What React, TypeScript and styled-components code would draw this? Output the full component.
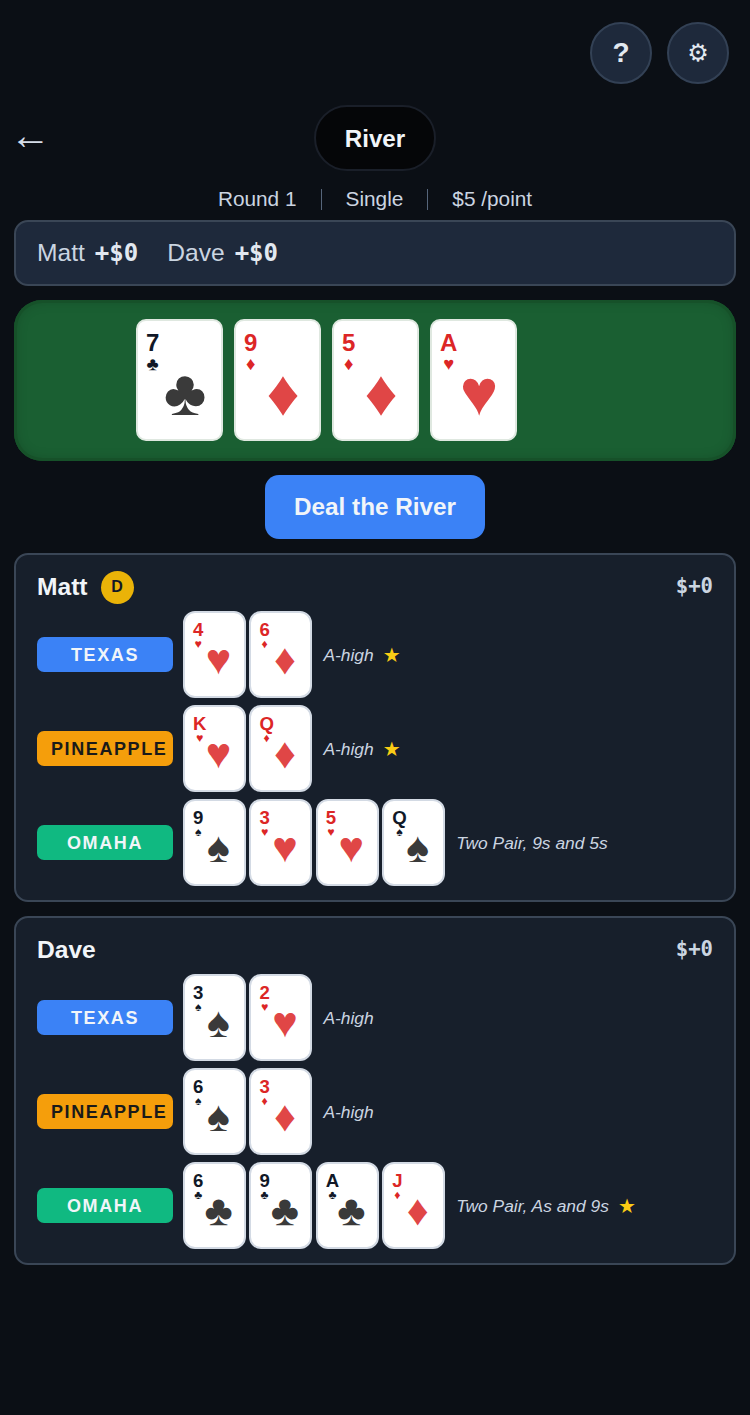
import React from "react";
import styled, { createGlobalStyle } from "styled-components";

type Suit = "club" | "diamond" | "heart" | "spade";
type CardData = { rank: string; suit: Suit };
type Variant = "texas" | "pineapple" | "omaha";

const SUIT_GLYPH: Record<Suit, string> = {
  club: "♣",
  diamond: "♦",
  heart: "♥",
  spade: "♠",
};

const isRed = (suit: Suit) => suit === "diamond" || suit === "heart";

const BADGE_COLORS: Record<Variant, { bg: string; fg: string }> = {
  texas: { bg: "#3b82f6", fg: "#f1f5f9" },
  pineapple: { bg: "#f59e0b", fg: "#1a1a1a" },
  omaha: { bg: "#10b981", fg: "#f1f5f9" },
};

const c = (rank: string, suit: Suit): CardData => ({ rank, suit });

const board = [c("7", "club"), c("9", "diamond"), c("5", "diamond"), c("A", "heart")];

const players = [
  {
    name: "Matt",
    dealer: true,
    hands: [
      { variant: "texas" as Variant, label: "TEXAS", cards: [c("4", "heart"), c("6", "diamond")], result: "A-high", star: true },
      { variant: "pineapple" as Variant, label: "PINEAPPLE", cards: [c("K", "heart"), c("Q", "diamond")], result: "A-high", star: true },
      { variant: "omaha" as Variant, label: "OMAHA", cards: [c("9", "spade"), c("3", "heart"), c("5", "heart"), c("Q", "spade")], result: "Two Pair, 9s and 5s", star: false },
    ],
  },
  {
    name: "Dave",
    dealer: false,
    hands: [
      { variant: "texas" as Variant, label: "TEXAS", cards: [c("3", "spade"), c("2", "heart")], result: "A-high", star: false },
      { variant: "pineapple" as Variant, label: "PINEAPPLE", cards: [c("6", "spade"), c("3", "diamond")], result: "A-high", star: false },
      { variant: "omaha" as Variant, label: "OMAHA", cards: [c("6", "club"), c("9", "club"), c("A", "club"), c("J", "diamond")], result: "Two Pair, As and 9s", star: true },
    ],
  },
];

const PlayingCard = ({ card, large }: { card: CardData; large?: boolean }) => (
  <S.Card $large={large}>
    <S.Corner $large={large} $red={isRed(card.suit)}>
      <S.Rank $large={large}>{card.rank}</S.Rank>
      <S.SmallSuit $large={large}>{SUIT_GLYPH[card.suit]}</S.SmallSuit>
    </S.Corner>
    <S.BigSuit $large={large} $red={isRed(card.suit)}>
      {SUIT_GLYPH[card.suit]}
    </S.BigSuit>
  </S.Card>
);

export default function App() {
  return (
    <S.Page>
      <GlobalStyle />
      <S.TopBar>
        <S.RoundButton>?</S.RoundButton>
        <S.RoundButton $gear>⚙</S.RoundButton>
      </S.TopBar>

      <S.Header>
        <S.BackArrow>←</S.BackArrow>
        <S.StagePill>River</S.StagePill>
      </S.Header>

      <S.Meta>
        <span>Round 1</span>
        <S.MetaSep />
        <span>Single</span>
        <S.MetaSep />
        <span>$5 /point</span>
      </S.Meta>

      <S.ScoreBar>
        <S.ScoreItem>
          Matt <S.ScoreValue>+$0</S.ScoreValue>
        </S.ScoreItem>
        <S.ScoreItem>
          Dave <S.ScoreValue>+$0</S.ScoreValue>
        </S.ScoreItem>
      </S.ScoreBar>

      <S.Felt>
        {board.map((card) => (
          <PlayingCard key={card.rank + card.suit} card={card} large />
        ))}
      </S.Felt>

      <S.DealRow>
        <S.DealButton>Deal the River</S.DealButton>
      </S.DealRow>

      {players.map((player) => (
        <S.Panel key={player.name}>
          <S.PanelHead>
            <S.NameWrap>
              <S.PlayerName>{player.name}</S.PlayerName>
              {player.dealer && <S.DealerChip>D</S.DealerChip>}
            </S.NameWrap>
            <S.PanelScore>$+0</S.PanelScore>
          </S.PanelHead>
          <S.Hands>
            {player.hands.map((hand) => (
              <S.HandRow key={hand.label}>
                <S.Badge $variant={hand.variant}>{hand.label}</S.Badge>
                <S.CardRow>
                  {hand.cards.map((card) => (
                    <PlayingCard key={card.rank + card.suit} card={card} />
                  ))}
                </S.CardRow>
                <S.Result>{hand.result}</S.Result>
                {hand.star && <S.Star>★</S.Star>}
              </S.HandRow>
            ))}
          </S.Hands>
        </S.Panel>
      ))}
    </S.Page>
  );
}

const GlobalStyle = createGlobalStyle`
  html, body {
    margin: 0;
    padding: 0;
    background: #0b0f15;
  }
  * {
    box-sizing: border-box;
  }
`;

const S = {
  Page: styled.div`
    width: 750px;
    height: 1415px;
    padding: 22px 14px 0;
    background: #0b0f15;
    color: #e2e8f0;
    font-family: "Liberation Sans", Arial, sans-serif;
    overflow: hidden;
  `,
  TopBar: styled.div`
    display: flex;
    justify-content: flex-end;
    gap: 15px;
    padding-right: 7px;
  `,
  RoundButton: styled.div<{ $gear?: boolean }>`
    width: 62px;
    height: 62px;
    border-radius: 50%;
    display: flex;
    align-items: center;
    justify-content: center;
    background: #1e293b;
    border: 2px solid #334155;
    color: #e2e8f0;
    font-family: ${(p) => (p.$gear ? '"DejaVu Sans", sans-serif' : "inherit")};
    font-size: ${(p) => (p.$gear ? "24px" : "28px")};
    font-weight: ${(p) => (p.$gear ? 400 : 700)};
  `,
  Header: styled.div`
    display: grid;
    grid-template-columns: 1fr auto 1fr;
    align-items: center;
    margin-top: 21px;
  `,
  BackArrow: styled.div`
    font-size: 41px;
    font-weight: 400;
    line-height: 60px;
    height: 66px;
    margin-left: -4px;
    color: #d5dde8;
  `,
  StagePill: styled.div`
    width: 122px;
    height: 66px;
    border-radius: 33px;
    display: flex;
    align-items: center;
    justify-content: center;
    padding-top: 1px;
    background: #050608;
    border: 2px solid #1a1f29;
    color: #f1f5f9;
    font-size: 24.2px;
    font-weight: 700;
  `,
  Meta: styled.div`
    display: flex;
    justify-content: center;
    align-items: center;
    gap: 24px;
    height: 24px;
    margin-top: 16px;
    color: #cbd5e1;
    font-size: 20.8px;
  `,
  MetaSep: styled.div`
    width: 1px;
    height: 21px;
    background: #56657a;
  `,
  ScoreBar: styled.div`
    display: flex;
    align-items: center;
    gap: 29px;
    height: 66px;
    margin-top: 9px;
    padding: 0 21px;
    background: #1e293b;
    border: 2px solid #3a4656;
    border-radius: 14px;
  `,
  ScoreItem: styled.div`
    display: flex;
    align-items: center;
    gap: 10px;
    color: #cbd5e1;
    font-size: 24.6px;
  `,
  ScoreValue: styled.span`
    font-family: "DejaVu Sans Mono", monospace;
    font-weight: 700;
    font-size: 24px;
    color: #e2e8f0;
  `,
  Felt: styled.div`
    display: flex;
    gap: 11px;
    height: 161px;
    margin-top: 14px;
    padding: 19px 0 0 122px;
    background: #1a5f32;
    border-radius: 28px;
    box-shadow: inset 0 0 0 3px #165129, inset 0 0 14px rgba(0, 0, 0, 0.2);
  `,
  Card: styled.div<{ $large?: boolean }>`
    display: grid;
    width: ${(p) => (p.$large ? "87px" : "63px")};
    height: ${(p) => (p.$large ? "122px" : "87px")};
    background: #fff;
    border: 2px solid ${(p) => (p.$large ? "#dfe8e0" : "#d3dae4")};
    border-radius: ${(p) => (p.$large ? "10px" : "12px")};
    overflow: hidden;
  `,
  Corner: styled.div<{ $large?: boolean; $red: boolean }>`
    grid-area: 1 / 1;
    display: flex;
    flex-direction: column;
    align-items: center;
    align-self: start;
    justify-self: start;
    padding: ${(p) => (p.$large ? "10px 0 0 8px" : "7px 0 0 8px")};
    color: ${(p) => (p.$red ? "#dc2626" : "#111827")};
    font-weight: 700;
  `,
  Rank: styled.div<{ $large?: boolean }>`
    font-size: ${(p) => (p.$large ? "24px" : "18.6px")};
    line-height: ${(p) => (p.$large ? "24px" : "19px")};
  `,
  SmallSuit: styled.div<{ $large?: boolean }>`
    font-size: ${(p) => (p.$large ? "18.5px" : "12.2px")};
    line-height: ${(p) => (p.$large ? "16px" : "10px")};
    font-weight: 400;
    margin-top: ${(p) => (p.$large ? "1px" : "0")};
  `,
  BigSuit: styled.div<{ $large?: boolean; $red: boolean }>`
    grid-area: 1 / 1;
    align-self: start;
    justify-self: start;
    display: flex;
    justify-content: center;
    width: ${(p) => (p.$large ? "42px" : "28px")};
    margin: ${(p) => (p.$large ? "51px 0 0 26px" : "32px 0 0 19.5px")};
    font-size: ${(p) => (p.$large ? "65px" : "43px")};
    line-height: ${(p) => (p.$large ? "42px" : "28px")};
    font-weight: 400;
    color: ${(p) => (p.$red ? "#e04646" : "#3a3a3a")};
  `,
  DealRow: styled.div`
    display: flex;
    justify-content: center;
    margin-top: 14px;
  `,
  DealButton: styled.div`
    width: 220px;
    height: 64px;
    display: flex;
    align-items: center;
    justify-content: center;
    background: #3b82f6;
    border-radius: 14px;
    color: #f1f5f9;
    font-size: 24.3px;
    font-weight: 700;
  `,
  Panel: styled.div`
    height: 349px;
    margin-top: 14px;
    padding: 15px 21px 0;
    background: #171f2b;
    border: 2px solid #3a4656;
    border-radius: 14px;
    & + & {
      margin-top: 14px;
    }
  `,
  PanelHead: styled.div`
    display: flex;
    align-items: center;
    justify-content: space-between;
    height: 34px;
  `,
  NameWrap: styled.div`
    display: flex;
    align-items: center;
    gap: 13px;
  `,
  PlayerName: styled.div`
    padding-bottom: 1px;
    font-size: 24.6px;
    font-weight: 700;
    color: #f1f5f9;
  `,
  DealerChip: styled.div`
    width: 33px;
    height: 33px;
    border-radius: 50%;
    display: flex;
    align-items: center;
    justify-content: center;
    background: #eab308;
    color: #111827;
    font-size: 16px;
    font-weight: 700;
  `,
  PanelScore: styled.div`
    padding-bottom: 2px;
    font-family: "DejaVu Sans Mono", monospace;
    font-size: 20.6px;
    font-weight: 700;
    color: #cbd5e1;
  `,
  Hands: styled.div`
    display: flex;
    flex-direction: column;
    gap: 7px;
    margin-top: 7px;
  `,
  HandRow: styled.div`
    display: flex;
    align-items: center;
  `,
  Badge: styled.div<{ $variant: Variant }>`
    width: 136px;
    height: 35px;
    margin-right: 10px;
    padding: 1px 14px 0;
    flex-shrink: 0;
    border-radius: 7px;
    background: ${(p) => BADGE_COLORS[p.$variant].bg};
    color: ${(p) => BADGE_COLORS[p.$variant].fg};
    font-size: 18px;
    line-height: 35px;
    font-weight: 700;
    letter-spacing: 1.6px;
    text-align: center;
    white-space: nowrap;
  `,
  CardRow: styled.div`
    display: flex;
    gap: 3.4px;
  `,
  Result: styled.div`
    margin: 2px 0 0 11px;
    color: #cbd5e1;
    font-size: 17.4px;
    font-style: italic;
  `,
  Star: styled.div`
    margin-left: 9px;
    font-family: "DejaVu Sans", sans-serif;
    color: #facc15;
    font-size: 20px;
    line-height: 1;
  `,
};
